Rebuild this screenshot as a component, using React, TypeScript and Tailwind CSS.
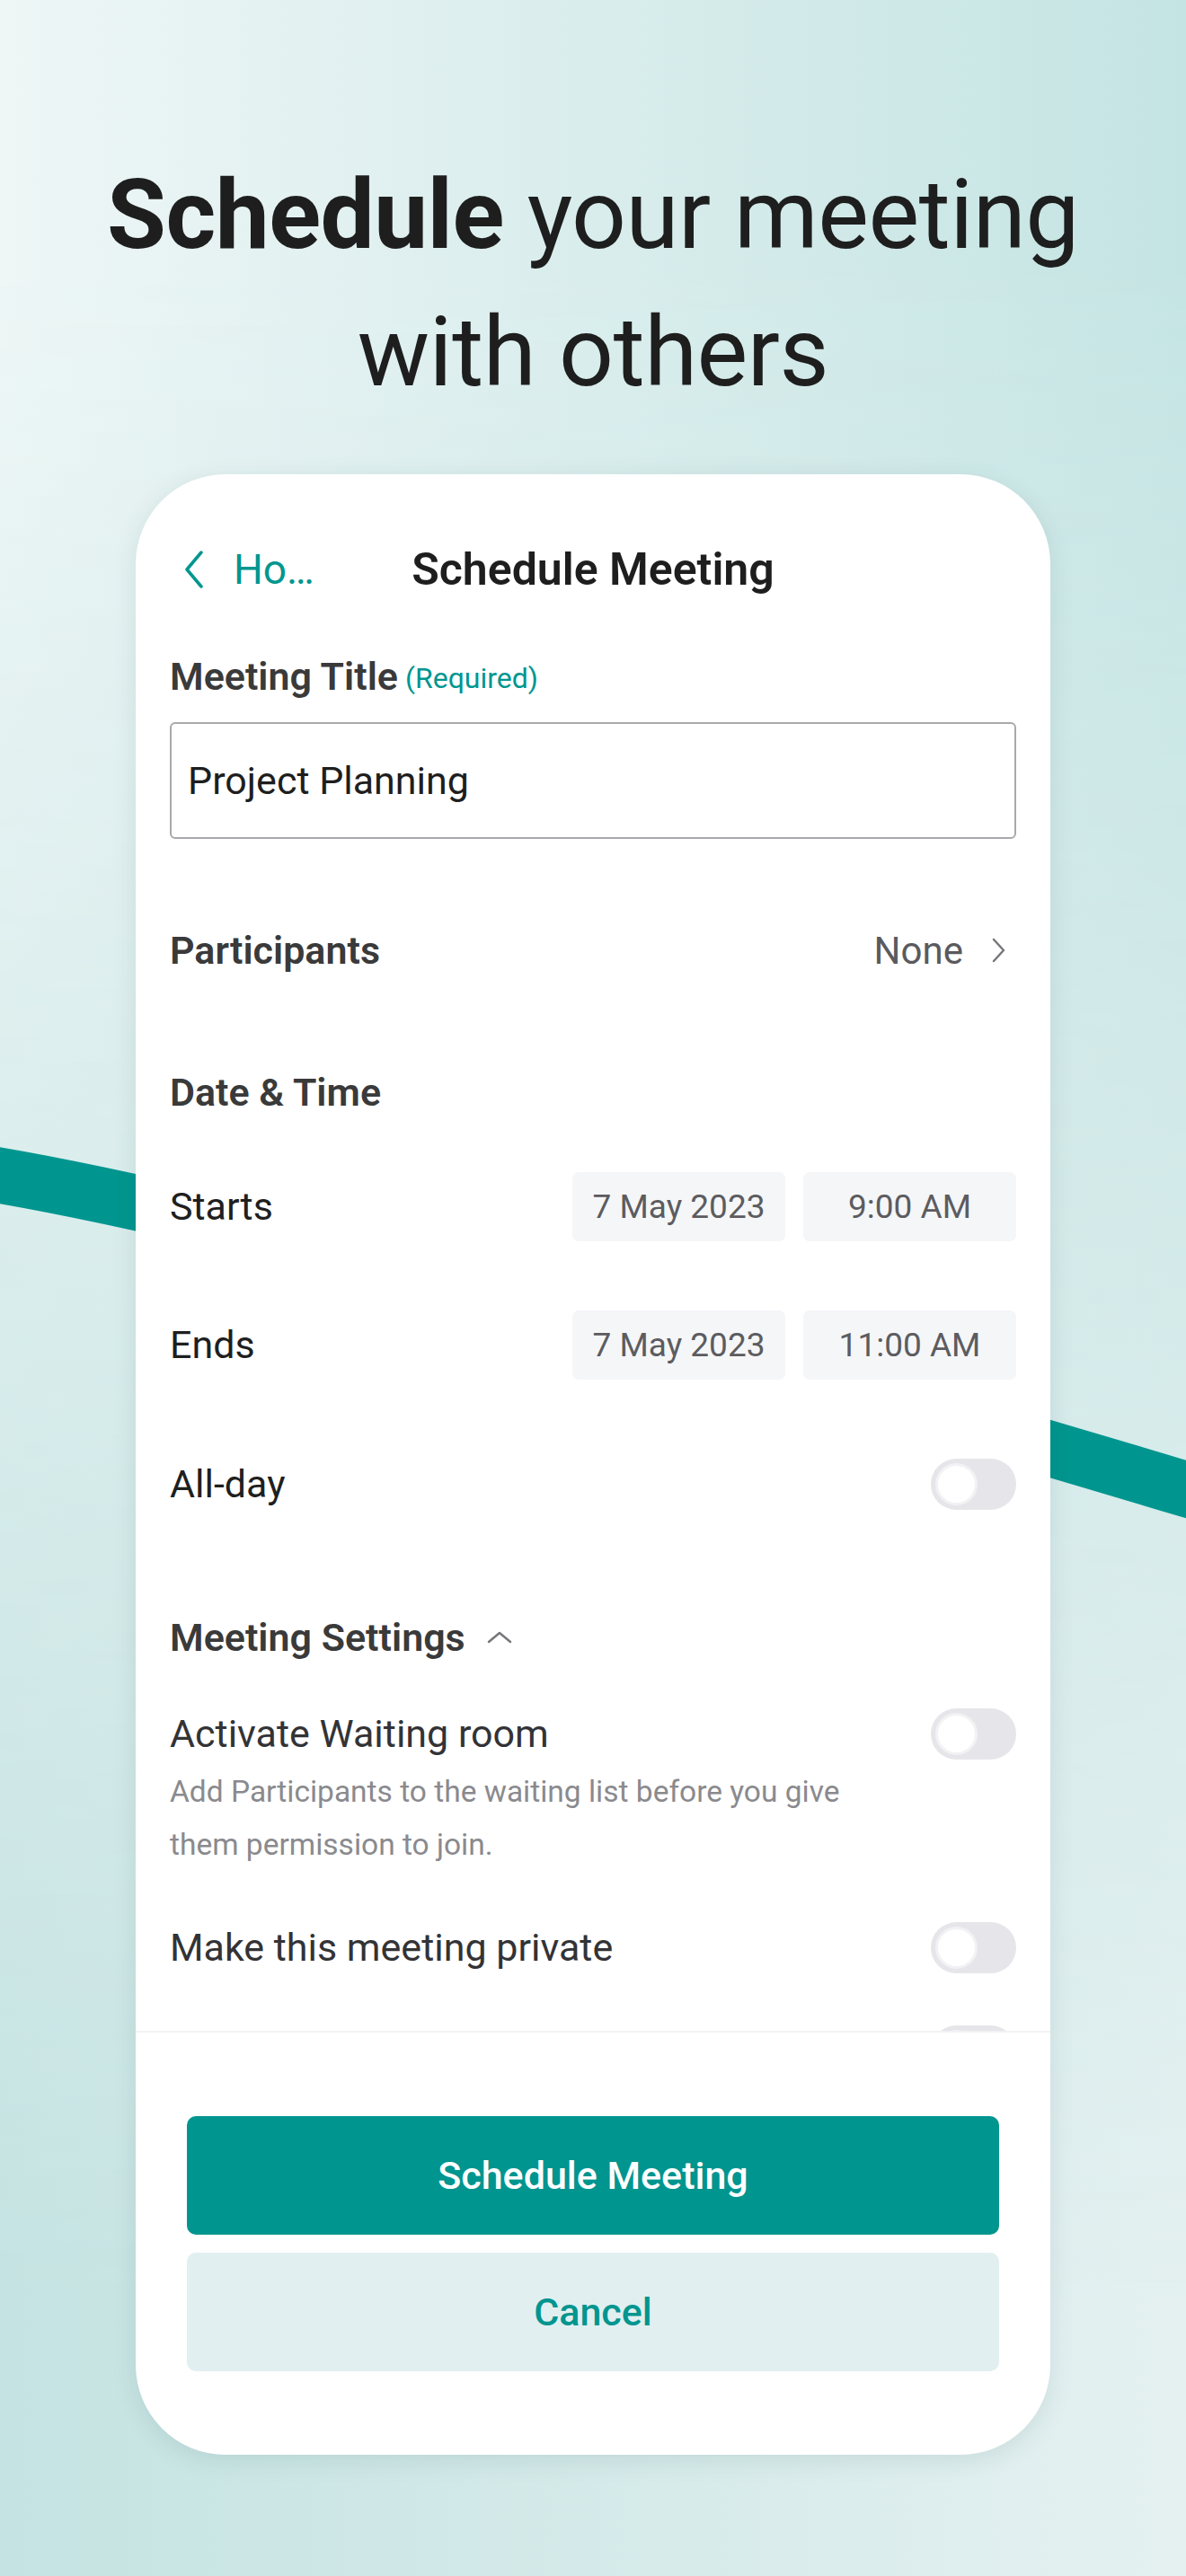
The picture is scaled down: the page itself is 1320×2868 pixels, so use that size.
import React from "react";

function Toggle() {
  return (
    <div className="w-[95px] h-[57px] rounded-full bg-[#e6e6ea] flex items-center pl-[5px] shrink-0">
      <div className="w-[47px] h-[47px] rounded-full bg-white border-[3px] border-[#f2f2f4]" />
    </div>
  );
}

function Pill({ text }: { text: string }) {
  return (
    <div className="w-[237px] h-[77px] rounded-[7px] bg-[#f5f6f8] flex items-center justify-center text-[37px] text-[#5c5c60]">
      {text}
    </div>
  );
}

function TimeRow({ label, date, time }: { label: string; date: string; time: string }) {
  return (
    <div className="flex items-center justify-between h-[77px]">
      <span className="text-[43px] text-[#1f1f1f]">{label}</span>
      <div className="flex gap-[20px]">
        <Pill text={date} />
        <Pill text={time} />
      </div>
    </div>
  );
}

export default function App() {
  return (
    <div className="relative w-full h-[2868px] overflow-hidden bg-linear-to-r from-[#c4e3e2] to-[#e5f1f1] [font-family:Roboto,sans-serif]">
      <div className="absolute inset-0 bg-linear-to-r from-[#eef6f6] to-[#c4e4e3] [mask-image:linear-gradient(to_bottom,black_10%,transparent_90%)]" />
      <svg className="absolute inset-0" width="1320" height="2868" viewBox="0 0 1320 2868">
        <path d="M-10 1307 Q353 1368 1330 1661" fill="none" stroke="#00968f" strokeWidth="62" />
      </svg>

      <div className="relative pt-[163px]">
        <h1 className="text-center text-[107px] leading-[153px] text-[#1e1e1e] tracking-[-0.5px]">
          <span className="font-bold">Schedule</span> your meeting
          <br />
          with others
        </h1>

        <div className="mx-auto mt-[59px] w-[1018px] h-[2205px] bg-white rounded-[100px] shadow-[0_6px_28px_rgba(0,60,60,0.10)] flex flex-col overflow-hidden">
          <div className="flex-1 overflow-hidden px-[38px] pt-[66px]">
            <div className="grid grid-cols-[1fr_auto_1fr] items-center h-[80px]">
              <div className="flex items-center gap-[33px] pl-[16px] text-[#00968f]">
                <svg width="22" height="42" viewBox="0 0 22 42">
                  <path d="M19 2 L3 21 L19 40" fill="none" stroke="#00968f" strokeWidth="3.5" strokeLinecap="round" strokeLinejoin="round" />
                </svg>
                <span className="text-[46px]">Ho…</span>
              </div>
              <span className="text-[50px] font-semibold text-[#1e1e1e]">Schedule Meeting</span>
              <div />
            </div>

            <div className="mt-[51px] h-[56px] flex items-center gap-[8px]">
              <span className="text-[43px] font-semibold text-[#3a3a3a]">Meeting Title</span>
              <span className="text-[32px] text-[#00968f] mt-[4px]">(Required)</span>
            </div>

            <div className="mt-[23px] h-[130px] border-2 border-[#a9a9ad] rounded-[6px] flex items-center px-[18px] text-[43px] text-[#1e1e1e]">
              Project Planning
            </div>

            <div className="mt-[84px] h-[80px] flex items-center justify-between">
              <span className="text-[43px] font-semibold text-[#3a3a3a]">Participants</span>
              <div className="flex items-center gap-[32px] pr-[12px]">
                <span className="text-[42px] text-[#5a5a5e]">None</span>
                <svg width="15" height="28" viewBox="0 0 15 28">
                  <path d="M2 2 L13 14 L2 26" fill="none" stroke="#77777b" strokeWidth="2.5" strokeLinecap="round" strokeLinejoin="round" />
                </svg>
              </div>
            </div>

            <div className="mt-[78px] h-[80px] flex items-center">
              <span className="text-[43px] font-semibold text-[#3a3a3a]">Date &amp; Time</span>
            </div>

            <div className="mt-[49px]">
              <TimeRow label="Starts" date="7 May 2023" time="9:00 AM" />
            </div>
            <div className="mt-[77px]">
              <TimeRow label="Ends" date="7 May 2023" time="11:00 AM" />
            </div>

            <div className="mt-[88px] h-[57px] flex items-center justify-between">
              <span className="text-[43px] text-[#1f1f1f]">All-day</span>
              <Toggle />
            </div>

            <div className="mt-[102px] h-[80px] flex items-center gap-[24px]">
              <span className="text-[43px] font-semibold text-[#3a3a3a]">Meeting Settings</span>
              <svg width="28" height="14" viewBox="0 0 28 14">
                <path d="M2 12 L14 2 L26 12" fill="none" stroke="#77777b" strokeWidth="2.5" strokeLinecap="round" strokeLinejoin="round" />
              </svg>
            </div>

            <div className="mt-[39px] h-[57px] flex items-center justify-between">
              <span className="text-[43px] text-[#333336]">Activate Waiting room</span>
              <Toggle />
            </div>
            <p className="mt-[6px] w-[770px] text-[33.5px] leading-[59px] text-[#8a8a8e]">
              Add Participants to the waiting list before you give them permission to join.
            </p>

            <div className="mt-[57px] h-[57px] flex items-center justify-between">
              <span className="text-[43px] text-[#333336]">Make this meeting private</span>
              <Toggle />
            </div>

            <div className="mt-[58px] h-[57px] flex items-center justify-end">
              <Toggle />
            </div>
          </div>

          <div className="h-[472px] shrink-0 border-t-2 border-[#f1f2f4] px-[57px] pt-[93px] flex flex-col gap-[20px]">
            <button className="h-[132px] rounded-[10px] bg-[#00958f] text-white text-[43px] font-medium">
              Schedule Meeting
            </button>
            <button className="h-[132px] rounded-[10px] bg-[#e1eff0] text-[#00958f] text-[43px] font-medium">
              Cancel
            </button>
          </div>
        </div>
      </div>
    </div>
  );
}
